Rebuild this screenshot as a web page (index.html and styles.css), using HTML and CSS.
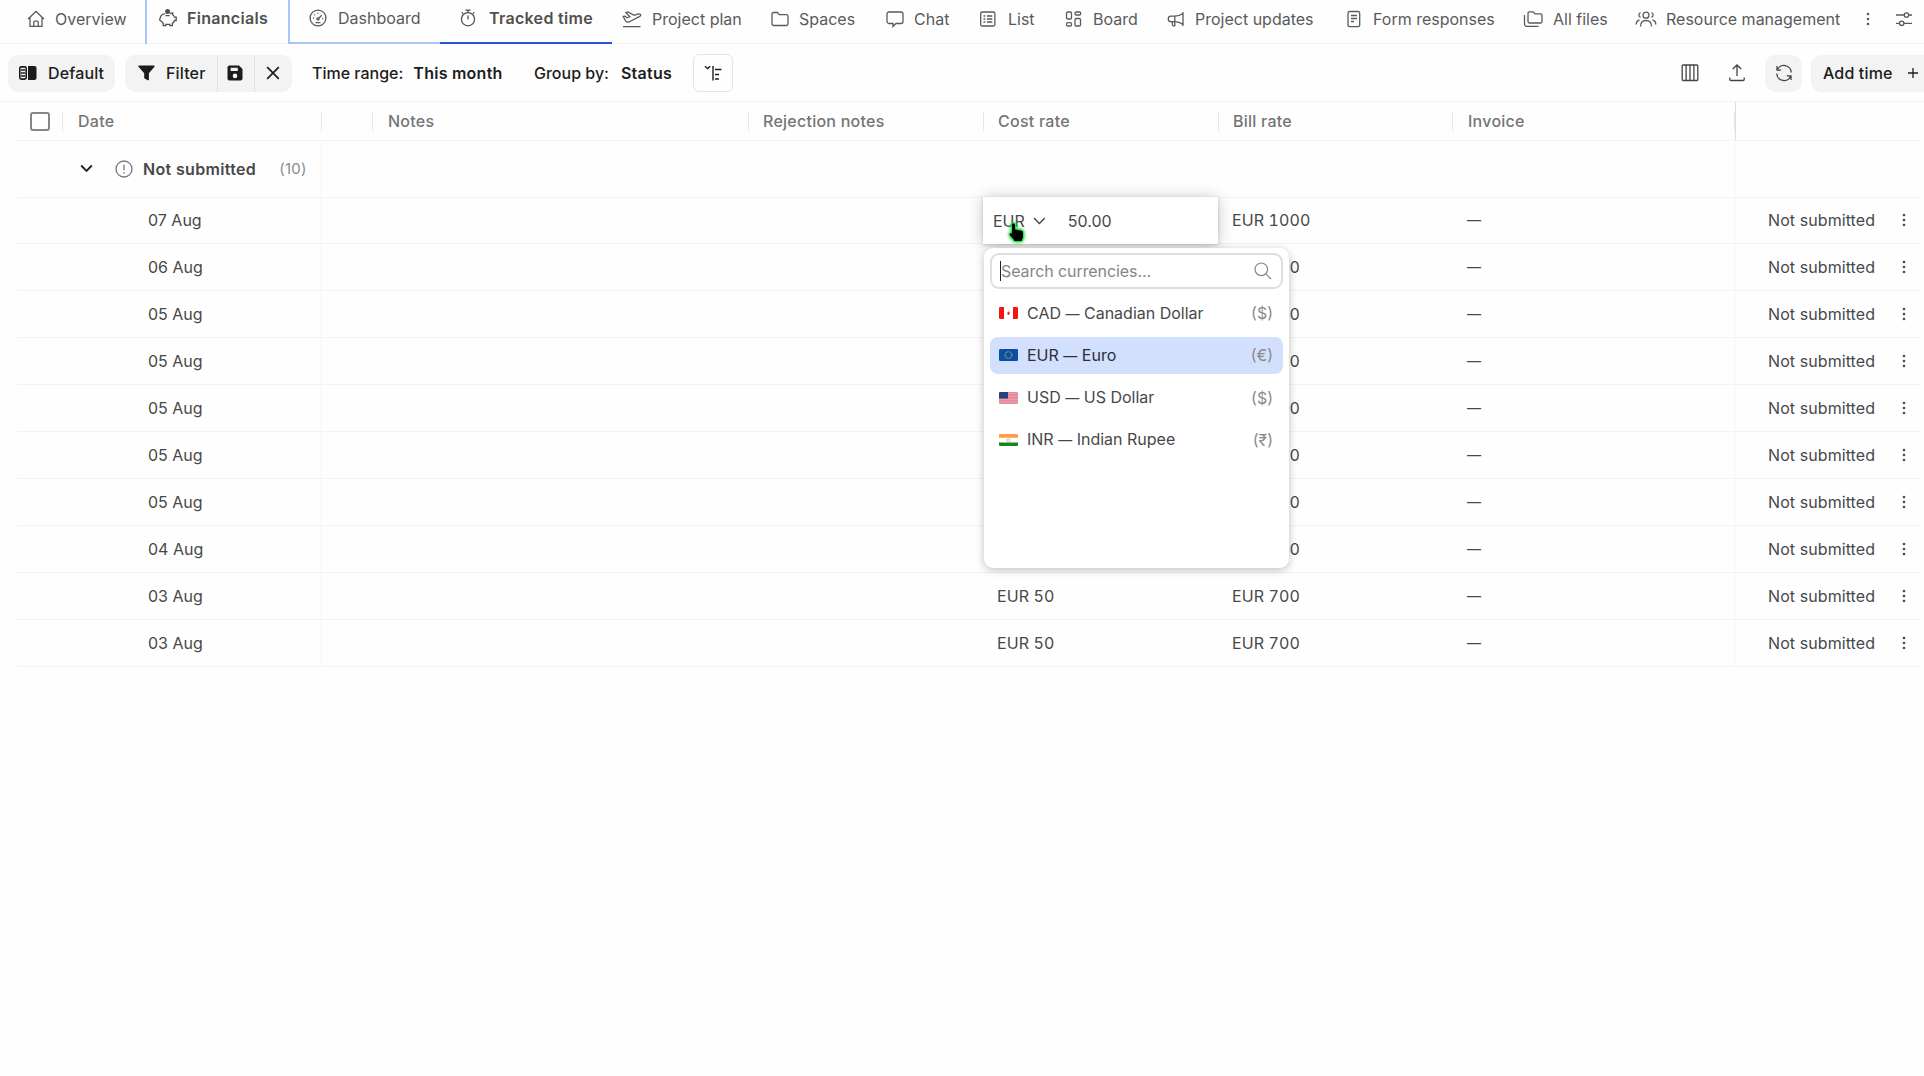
FILE: index.html
```html
<!DOCTYPE html>
<html lang="en">
<head>
<meta charset="utf-8">
<title>Tracked time</title>
<link rel="stylesheet" href="styles.css">
</head>
<body>
<svg class="defs" width="0" height="0">
  <symbol id="dots" viewBox="0 0 4 16"><circle cx="2" cy="3" r="1.3"/><circle cx="2" cy="8" r="1.3"/><circle cx="2" cy="13" r="1.3"/></symbol>
</svg>
<nav class="tabs">
  <a class="tab overview"><svg class="icon" viewBox="0 0 18 18"><path d="M1 9 9 1.500 17 9M3 7.500V16.300H15V7.500M6.800 16V12.200a1 1 0 0 1 1-1h2.400a1 1 0 0 1 1 1V16"/></svg><span>Overview</span></a>
  <a class="tab financials raised bold"><svg class="icon" viewBox="0 0 18 18"><circle cx="8.600" cy="2.600" r="2.500" class="solid"/><path d="M5.800 4.600C3.500 5.100 1.600 6.800 1.200 8.800L.6 11l2 1.600 1.600 1.700v2.300h2.600v-1.200h4v1.200h2.600v-2.400c1.300-.8 1.800-1.600 2.100-2.700h1.700V8.200h-1.600C15 6.700 14 6 13.700 5.700V3.800c-1 0-2 .5-2.500 1.200M6.600 6.700h4"/></svg><span>Financials</span></a>
  <a class="tab dashboard raised"><svg class="icon" viewBox="0 0 18 18"><circle cx="9" cy="9" r="7.900"/><path d="M9.700 9.200 12.800 6.200"/><circle cx="9" cy="10" r="1.100"/><path d="M4 9h1M5.200 5.400l.7.7M9 3.700v1M13.200 9.500h1M6.500 13.600h5"/></svg><span>Dashboard</span></a>
  <a class="tab tracked raised bold"><svg class="icon" viewBox="0 0 18 18"><circle cx="9" cy="10.200" r="6.600"/><path d="M9 6.500v4M6.500 1.200h5M9 1.200v2.300M14 4.500l1.200-1.200M4 4.500 2.800 3.300"/></svg><span>Tracked time</span></a>
  <a class="tab plan"><svg class="icon wide" viewBox="0 0 20 18"><path d="M1 16.700h17.500M1.200 6.500l1.700-.4 2 1.700 3-1-4-4.200 2-.6 6.200 3.300 3.500-1.200c1.600-.5 3 .1 3.200.8s-.8 1.500-2 2L7 12c-1.600.4-2.500.2-3.300-.8z"/></svg><span>Project plan</span></a>
  <a class="tab spaces"><svg class="icon" viewBox="0 0 18 18"><path d="M1 4.200a1.700 1.700 0 0 1 1.700-1.700h3.600l2 2.200h7a1.700 1.700 0 0 1 1.700 1.700v7.400a1.700 1.700 0 0 1-1.700 1.700H2.700A1.700 1.700 0 0 1 1 13.800z"/></svg><span>Spaces</span></a>
  <a class="tab chat"><svg class="icon" viewBox="0 0 18 18"><path d="M3 2h12a2 2 0 0 1 2 2v7.500a2 2 0 0 1-2 2H10L7 16.500v-3H3a2 2 0 0 1-2-2V4a2 2 0 0 1 2-2z"/></svg><span>Chat</span></a>
  <a class="tab list"><svg class="icon" viewBox="0 0 18 18"><rect x="1.700" y="2" width="14.200" height="14" rx="1.500"/><path d="M4.500 6h1.800M4.500 9h1.800M4.500 12h1.800M8 6h5.300M8 9h5.300M8 12h5.300"/></svg><span>List</span></a>
  <a class="tab board"><svg class="icon" viewBox="0 0 18 18"><rect x="1.500" y="2" width="5" height="7" rx="1.300"/><rect x="10" y="2" width="5.700" height="3" rx="1.200"/><rect x="1.500" y="12.700" width="5" height="3.300" rx="1.300"/><rect x="10" y="8.500" width="5.500" height="7.500" rx="1.300"/></svg><span>Board</span></a>
  <a class="tab updates"><svg class="icon" viewBox="0 0 18 18"><path d="M16 2v14M16 3.500C13 5.800 10 6.200 7.500 6.200H4a2.700 2.700 0 0 0 0 5.500h3.500c2.500 0 5.500.5 8.500 2.800M7.800 6.200v5.500M5 11.700l.6 3.400a1 1 0 0 0 1 .8h.6a.8.800 0 0 0 .8-1l-.6-3"/></svg><span>Project updates</span></a>
  <a class="tab form"><svg class="icon" viewBox="0 0 18 18"><rect x="3" y="1.500" width="11.700" height="15.200" rx="1.700"/><path d="M6 5.500h6M6 8.500h6M6 11.500h3"/></svg><span>Form responses</span></a>
  <a class="tab files"><svg class="icon wide" viewBox="0 0 20 18"><path d="M5 3.200a1.400 1.400 0 0 1 1.400-1.400h3.800l1.800 2h5.600A1.400 1.400 0 0 1 19 5.200v6.400a1.400 1.400 0 0 1-1.400 1.400H6.400A1.400 1.400 0 0 1 5 11.600zM1.500 5v9a2.300 2.300 0 0 0 2.300 2.300H15.500"/></svg><span>All files</span></a>
  <a class="tab resource"><svg class="icon people" viewBox="0 0 22 18"><circle cx="11" cy="5.200" r="3"/><path d="M5.500 16.500c0-3.800 2.400-6 5.500-6s5.500 2.200 5.500 6M5.500 2.500a2.600 2.600 0 0 0 0 4.800M16.500 2.500a2.600 2.600 0 0 1 0 4.800M1.200 14.500c0-2.600 1.200-4 3.300-4.500M20.800 14.500c0-2.600-1.200-4-3.300-4.500"/></svg><span>Resource management</span></a>
  <svg class="dots tab-dots"><use href="#dots"/></svg>
  <svg class="icon sliders" viewBox="0 0 18 18"><path d="M1 5h8.200M13.800 5H17M1 13.300h3.500M9 13.300h8"/><circle cx="11.500" cy="5" r="2.200"/><circle cx="6.700" cy="13.300" r="2.200"/></svg>
</nav>

<section class="toolbar">
  <button class="pill default"><svg width="18" height="14" viewBox="0 0 18 14"><rect x=".8" y=".9" width="6.400" height="12.200" rx="1.500" fill="none" stroke="currentColor" stroke-width="1.600"/><path d="M2 4h4M2 7h4M2 10h4" stroke="currentColor" stroke-width="1.300"/><path d="M9 0h6.500A2 2 0 0 1 17.500 2v10a2 2 0 0 1-2 2H9z" fill="currentColor"/></svg><span>Default</span></button>
  <div class="pill group">
    <button class="filter"><svg width="17" height="16" viewBox="0 0 17 16"><path d="M1 .6h15a.7.700 0 0 1 .5 1.200L10.900 8.300v6.200a.8.800 0 0 1-1.200.7L6.700 13.500a1 1 0 0 1-.5-.8V8.300L.5 1.800A.7.700 0 0 1 1 .6z" fill="currentColor"/></svg><span>Filter</span></button>
    <button class="save"><svg width="16" height="16" viewBox="0 0 16 16"><path fill="currentColor" fill-rule="evenodd" d="M2.500.5H12L15.500 4v9.500a2 2 0 0 1-2 2h-11a2 2 0 0 1-2-2v-11a2 2 0 0 1 2-2zM3.600 2.700v3.400h7.200V2.700zM8 8.600a2.300 2.300 0 1 0 0 4.600 2.300 2.300 0 0 0 0-4.600z"/></svg></button>
    <button class="clear"><svg width="14" height="14" viewBox="0 0 14 14"><path d="M1.200 1.200 12.800 12.800M12.800 1.200 1.200 12.800" stroke="currentColor" stroke-width="1.700"/></svg></button>
  </div>
  <div class="option range"><span class="label">Time range:</span><b>This month</b></div>
  <div class="option groupby"><span class="label">Group by:</span><b>Status</b></div>
  <button class="outline"><svg width="18" height="16" viewBox="0 0 18 16" fill="none" stroke="currentColor" stroke-width="1.400"><path d="M1 1.200l2.600 2.300L6.200 1.200M9 1v14.500M11 4.500h6.500M11 9.500h4M11 14h4"/></svg></button>
  <div class="actions">
    <svg class="icon columns" viewBox="0 0 18 18"><rect x="1.200" y="1" width="15.600" height="15.500" rx="1"/><path d="M5.100 1v15.500M9 1v15.500M12.900 1v15.500"/></svg>
    <svg class="icon upload" viewBox="0 0 18 18"><path d="M9 12V1M4.800 5 9 1l4.200 4M1.800 13.500v1.800a1.200 1.200 0 0 0 1.200 1.200h12a1.200 1.200 0 0 0 1.200-1.200v-1.800"/></svg>
    <button class="pill refresh"><svg class="icon" viewBox="0 0 18 18"><path d="M2 2v4.200h4.200M2.300 6A7.200 7.200 0 0 1 16.200 8.500M16 16v-4.200h-4.200M15.700 12A7.200 7.200 0 0 1 1.800 9.500"/></svg></button>
    <button class="pill add"><span>Add time</span><svg width="10" height="10" viewBox="0 0 10 10"><path d="M5 0v10M0 5h10" stroke="currentColor" stroke-width="1.300"/></svg></button>
  </div>
</section>

<main class="table">
  <div class="row head">
    <div class="check"><i></i></div><div class="date">Date</div><div class="gap"></div><div class="notes">Notes</div><div class="rej">Rejection notes</div><div class="cost">Cost rate</div><div class="bill">Bill rate</div><div class="inv">Invoice</div><div class="status"></div>
  </div>
  <div class="row grouprow">
    <div class="first"><svg class="chev" width="13" height="9" viewBox="0 0 13 9"><path d="M1.200 1.500l5.300 5.300 5.300-5.300" fill="none" stroke="currentColor" stroke-width="1.900"/></svg><svg class="icon alert" viewBox="0 0 18 18"><circle cx="9" cy="9" r="8"/><path d="M9 4.700v5.500M9 12v1.500"/></svg><b>Not submitted</b><span class="count">(10)</span></div>
    <div class="mid"></div><div class="status"></div>
  </div>
  <div class="row"><div class="first">07 Aug</div><div class="wide-notes"></div><div class="cost editing">
      <div class="editor"><span class="code">EUR</span><svg width="13" height="8" viewBox="0 0 13 8"><path d="M1 1l5.400 5.500L11.800 1" fill="none" stroke="currentColor" stroke-width="1.400"/></svg><span class="amount">50.00</span></div>
      <div class="dropdown">
        <div class="search"><span>Search currencies...</span><svg width="18" height="18" viewBox="0 0 18 18" fill="none" stroke="currentColor" stroke-width="1.200"><circle cx="7.300" cy="7.300" r="6.300"/><path d="M11.800 11.800 17 17"/></svg></div>
        <div class="item"><svg class="flag" viewBox="0 0 19 12"><rect width="19" height="12" rx="1.200" fill="#fff"/><path d="M1.200 0H5v12H1.200A1.200 1.200 0 0 1 0 10.800V1.200A1.200 1.200 0 0 1 1.200 0zM14 0h3.800A1.200 1.200 0 0 1 19 1.200v9.600a1.200 1.200 0 0 1-1.200 1.200H14z" fill="#f51414"/><path d="M9.500 4.200l.6 1.200 1.200.4-1 1 .1 1H8.600l.1-1-1-1 1.200-.4z" fill="#f51414"/></svg><span class="name">CAD <span class="dash">—</span> Canadian Dollar</span><span class="sym">($)</span></div>
        <div class="item on"><svg class="flag" viewBox="0 0 19 12"><rect width="19" height="12" rx="1.200" fill="#0b4ea2"/><circle cx="9.500" cy="6" r="3.300" fill="none" stroke="#8aa66c" stroke-width="1.200" stroke-dasharray="1.100 .63"/></svg><span class="name">EUR <span class="dash">—</span> Euro</span><span class="sym">(€)</span></div>
        <div class="item"><svg class="flag" viewBox="0 0 19 12"><rect width="19" height="12" rx="1.200" fill="#e58a9b"/><path d="M9 1.500h10M9 4.300h10M0 7.500h19M0 10h19" stroke="#eda6b2" stroke-width=".8"/><path d="M1.200 0H9v6.600H0V1.200A1.200 1.200 0 0 1 1.200 0z" fill="#2b3f85"/></svg><span class="name">USD <span class="dash">—</span> US Dollar</span><span class="sym">($)</span></div>
        <div class="item"><svg class="flag" viewBox="0 0 19 12"><rect width="19" height="12" rx="1.200" fill="#fff"/><path d="M1.200 0h16.600A1.200 1.200 0 0 1 19 1.200V3.800H0V1.200A1.200 1.200 0 0 1 1.200 0z" fill="#ff9d42"/><path d="M0 8.600h19v2.200a1.200 1.200 0 0 1-1.200 1.200H1.200A1.200 1.200 0 0 1 0 10.800z" fill="#14871a"/><circle cx="9.500" cy="6.200" r="1.600" fill="none" stroke="#a9a9bd" stroke-width=".7"/></svg><span class="name">INR <span class="dash">—</span> Indian Rupee</span><span class="sym">(₹)</span></div>
      </div>
      <svg class="pointer" width="18" height="22" viewBox="0 0 18 22"><path d="M5.500 1.500c1 0 1.500.7 1.500 1.600v4.600c.8-.4 1.900-.3 2.400.5.800-.5 1.900-.3 2.400.5 1.900-.4 3.200.4 3.200 2.300v3.300c0 2-1 3-1.400 4.700H6.500c-.6-2.300-3-3.300-4.600-6-.7-1.200.4-2.200 1.700-1.500l.5.500V3.100c0-.9.500-1.600 1.400-1.600z"/></svg>
    </div><div class="bill">EUR 1000</div><div class="inv"><span class="dash">—</span></div><div class="status"><span>Not submitted</span><svg class="dots"><use href="#dots"/></svg></div></div>
  <div class="row"><div class="first">06 Aug</div><div class="wide-notes"></div><div class="cost">EUR 50</div><div class="bill">EUR 700</div><div class="inv"><span class="dash">—</span></div><div class="status"><span>Not submitted</span><svg class="dots"><use href="#dots"/></svg></div></div>
  <div class="row"><div class="first">05 Aug</div><div class="wide-notes"></div><div class="cost">EUR 50</div><div class="bill">EUR 700</div><div class="inv"><span class="dash">—</span></div><div class="status"><span>Not submitted</span><svg class="dots"><use href="#dots"/></svg></div></div>
  <div class="row"><div class="first">05 Aug</div><div class="wide-notes"></div><div class="cost">EUR 50</div><div class="bill">EUR 700</div><div class="inv"><span class="dash">—</span></div><div class="status"><span>Not submitted</span><svg class="dots"><use href="#dots"/></svg></div></div>
  <div class="row"><div class="first">05 Aug</div><div class="wide-notes"></div><div class="cost">EUR 50</div><div class="bill">EUR 700</div><div class="inv"><span class="dash">—</span></div><div class="status"><span>Not submitted</span><svg class="dots"><use href="#dots"/></svg></div></div>
  <div class="row"><div class="first">05 Aug</div><div class="wide-notes"></div><div class="cost">EUR 50</div><div class="bill">EUR 700</div><div class="inv"><span class="dash">—</span></div><div class="status"><span>Not submitted</span><svg class="dots"><use href="#dots"/></svg></div></div>
  <div class="row"><div class="first">05 Aug</div><div class="wide-notes"></div><div class="cost">EUR 50</div><div class="bill">EUR 700</div><div class="inv"><span class="dash">—</span></div><div class="status"><span>Not submitted</span><svg class="dots"><use href="#dots"/></svg></div></div>
  <div class="row"><div class="first">04 Aug</div><div class="wide-notes"></div><div class="cost">EUR 50</div><div class="bill">EUR 700</div><div class="inv"><span class="dash">—</span></div><div class="status"><span>Not submitted</span><svg class="dots"><use href="#dots"/></svg></div></div>
  <div class="row"><div class="first">03 Aug</div><div class="wide-notes"></div><div class="cost">EUR 50</div><div class="bill">EUR 700</div><div class="inv"><span class="dash">—</span></div><div class="status"><span>Not submitted</span><svg class="dots"><use href="#dots"/></svg></div></div>
  <div class="row"><div class="first">03 Aug</div><div class="wide-notes"></div><div class="cost">EUR 50</div><div class="bill">EUR 700</div><div class="inv"><span class="dash">—</span></div><div class="status"><span>Not submitted</span><svg class="dots"><use href="#dots"/></svg></div></div>
</main>
</body>
</html>
```
FILE: styles.css
```css
* { box-sizing: border-box; }
body {
  margin: 0;
  width: 1924px;
  height: 1076px;
  overflow: hidden;
  background: #fefefe;
  color: #484848;
  font-family: Inter, "Liberation Sans", sans-serif;
  font-size: 16px;
  line-height: 20px;
  white-space: nowrap;
}
button { border: 0; padding: 0; background: none; color: inherit; font: inherit; letter-spacing: inherit; }
.defs { display: block; height: 0; }
svg { flex: none; }
.icon { width: 18px; height: 18px; fill: none; stroke: currentColor; stroke-width: 1.3; }
.icon.wide { width: 20px; }
.icon.people { width: 22px; }
.icon .solid { fill: currentColor; stroke: none; }
.dots { width: 4px; height: 16px; fill: currentColor; }
.dash { font-size: 14px; }

/* Tabs */
.tabs { display: flex; height: 44px; border-bottom: 1px solid #f3f3f3; color: #5a5a5a; }
.tab { display: flex; align-items: center; gap: 10px; height: 44px; padding: 0 0 6px 27px; flex: none; }
.tab.raised { padding-bottom: 8px; }
.bold { font-weight: 600; letter-spacing: .3px; color: #505050; }
.overview { width: 145px; }
.financials { width: 145px; padding-left: 12px; border: solid #a9c4f7; border-width: 0 2px 0 2px; }
.dashboard { width: 150px; padding-left: 19px; gap: 11px; border-bottom: 2px solid #a9c4f7; }
.tracked { width: 172px; padding-left: 19px; border-bottom: 2px solid #2457d6; gap: 12px; }
.raised.dashboard, .raised.tracked { padding-bottom: 6px; }
.plan { width: 148px; padding-left: 10px; }
.spaces { width: 115px; padding-left: 11px; }
.chat { width: 95px; padding-left: 11px; }
.list { width: 85px; padding-left: 9px; gap: 11px; }
.board { width: 100px; padding-left: 10px; }
.updates { width: 180px; padding-left: 12px; }
.form { width: 175px; padding-left: 10px; }
.files { width: 120px; padding-left: 13px; }
.resource { width: 236px; padding-left: 5px; gap: 9px; }
.tab-dots { margin: 11px 0 0; }
.sliders { margin: 10px 0 0 25px; }

/* Toolbar */
.toolbar { display: flex; align-items: center; height: 58px; padding: 1px 0 0 8px; border-bottom: 1px solid #f3f3f3; color: #1c1c1c; font-weight: 500; letter-spacing: .15px; }
.pill { display: flex; align-items: center; height: 37px; border-radius: 10px; background: #f3f3f3; }
.default { width: 107px; padding-left: 11px; gap: 11px; }
.group { width: 167px; margin-left: 10px; overflow: hidden; }
.group button { display: flex; align-items: center; height: 37px; }
.filter { width: 92px; padding-left: 13px; gap: 11px; }
.save { width: 38px; padding-left: 9px; border: solid #e2e2e2; border-width: 0 1px; }
.clear { width: 37px; padding-left: 11px; }
.option { display: flex; gap: 8px; }
.option .label { letter-spacing: 0; }
.option b { font-weight: 600; letter-spacing: .25px; }
.range { width: 222px; margin-left: 20px; gap: 10px; }
.groupby { width: 159px; gap: 12px; }
.outline { display: flex; align-items: center; justify-content: center; width: 40px; height: 38px; border: 1.500px solid #e4e4e4; border-radius: 6px; }
.actions { display: flex; align-items: center; margin-left: auto; color: #444; }
.upload { margin: 0 19px 0 29px; }
.refresh { width: 37px; justify-content: center; }
.add { width: 113px; margin-left: 9px; padding-left: 12px; gap: 15px; border-radius: 10px 0 0 10px; color: #1c1c1c; }

/* Table */
.table { width: 1904px; margin-left: 17px; }
.row { display: flex; height: 46.940px; border-bottom: 1px solid #f3f3f3; }
.row > div { display: flex; align-items: center; flex: none; }
.row.head { height: 39px; color: #757575; font-weight: 500; letter-spacing: .25px; }
.row.grouprow { height: 56.500px; }
.head > div { position: relative; }
.head > div:not(.status)::after { content: ""; position: absolute; right: 0; top: 10px; height: 19px; width: 1.500px; background: #e6e6e6; }
.check { width: 46px; padding-left: 13px; }
.check i { width: 20px; height: 19px; border: 2px solid #858585; border-radius: 3px; }
.date { width: 259px; padding-left: 15px; }
.gap { width: 51px; }
.notes { width: 376px; padding-left: 15px; }
.rej { width: 235px; padding-left: 14px; }
.wide-notes { width: 661px; }
.cost { width: 235px; padding-left: 14px; }
.bill { width: 234px; padding-left: 14px; }
.row:not(.head) .bill, .row:not(.head) .cost { font-variant-numeric: tabular-nums; letter-spacing: .1px; }
.inv { width: 282px; padding-left: 15px; }
.status { width: 186px; padding-left: 33px; }
.status span { letter-spacing: .08px; }
.head .status { border-left: 1px solid #dcdcdc; }
.row:not(.head) .status { border-left: 1px solid #f4f4f4; }
.status .dots { margin-left: 27px; }
.first { width: 305px; padding-left: 131px; border-right: 1px solid #f4f4f4; }
.grouprow .first { padding-left: 63px; }
.mid { width: 1412px; }
.chev { margin-right: 22px; color: #222; }
.alert { margin-right: 10px; color: #777; }
.first b { font-weight: 600; letter-spacing: .33px; }
.count { margin-left: 23px; color: #8c8c8c; font-size: 15px; letter-spacing: .3px; }

/* Cost rate editor with its currency menu */
.row > .editing { position: relative; padding: 0; }
.row > .editing.cost { letter-spacing: 0; font-variant-numeric: normal; }
.editor { display: flex; align-items: center; width: 235px; height: 47px; padding: 1px 0 0 10px; background: #fff; box-shadow: 0 1px 16px rgba(0,0,0,.22), 0 1px 3px rgba(0,0,0,.18); }
.editor svg { margin: 0 22px 0 8px; }
.dropdown { position: absolute; z-index: 2; left: 1px; top: 50px; width: 305px; height: 320px; padding: 5px 6px; border-radius: 9px; background: #fff; box-shadow: 0 2px 8px rgba(0,0,0,.25); }
.search { display: flex; align-items: center; justify-content: space-between; height: 36px; margin-bottom: 6px; padding: 0 9px 0 8px; border: 2px solid #dedede; border-radius: 9px; color: #858585; }
.search span { border-left: 1px solid #222; letter-spacing: -.08px; }
.item { display: flex; align-items: center; height: 37px; margin-bottom: 5.300px; padding: 0 10px 0 9px; border-radius: 8px; }
.item.on { background: #d2e0fd; color: #2a2f3c; }
.flag { width: 19px; height: 12px; margin-right: 9px; }
.sym { margin-left: auto; color: #8b8b8b; }
.pointer { position: absolute; z-index: 3; left: 25px; top: 24px; fill: #000; overflow: visible; filter: drop-shadow(0 0 1px #14e03c) drop-shadow(0 0 1.500px #14e03c) drop-shadow(0 0 1px #14e03c); }
```
